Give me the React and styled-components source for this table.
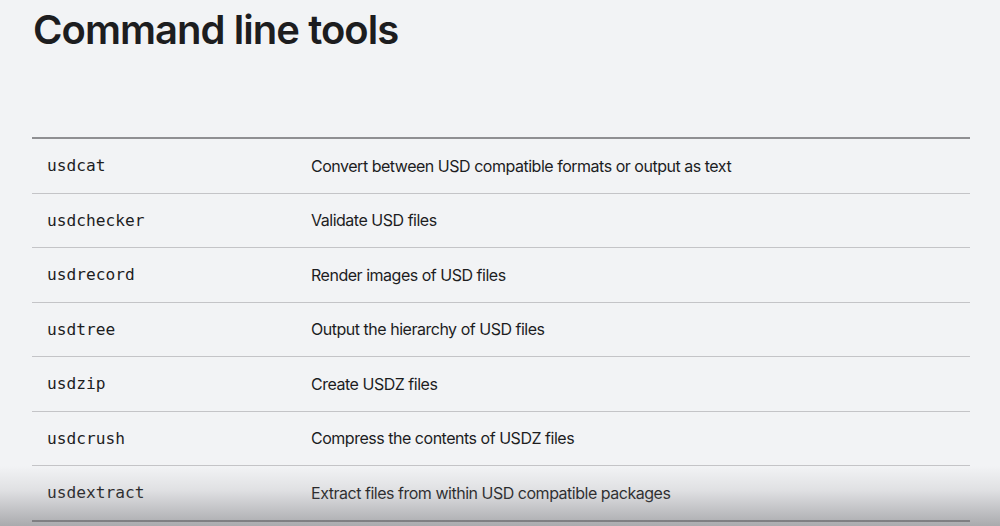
import React from "react";
import styled, { createGlobalStyle } from "styled-components";

const Global = createGlobalStyle`
  html, body { margin: 0; padding: 0; background: #f2f3f5; }
  body { width: 1000px; height: 526px; overflow: hidden; }
`;

const Page = styled.div`
  position: relative;
  width: 1000px;
  height: 526px;
  box-sizing: border-box;
  padding: 6px 30px 0 32px;
  font-family: Inter, "Noto Sans", sans-serif;
  color: #1d1d1f;
  overflow: hidden;
`;

const Title = styled.h1`
  margin: 0 0 0 1px;
  font-size: 40px;
  line-height: 48px;
  font-weight: 600;
  letter-spacing: -0.95px;
  color: #1d1d1f;
`;

const Table = styled.div`
  margin-top: 83px;
  border-top: 2px solid #8f8f92;
  display: flex;
  flex-direction: column;
`;

const Row = styled.div`
  display: grid;
  grid-template-columns: 279px 1fr;
  align-items: center;
  height: 53.5px;
  border-bottom: 1px solid #c4c4c7;
  &:last-child { border-bottom: 2px solid #8f8f92; }
`;

const Cmd = styled.span`
  padding-left: 15px;
  font-family: "DejaVu Sans Mono", "Liberation Mono", monospace;
  font-size: 16.2px;
  color: #1d1d1f;
`;

const Desc = styled.span`
  font-size: 16px;
  letter-spacing: -0.48px;
  color: #1d1d1f;
`;

const Shade = styled.div`
  position: absolute;
  left: 0;
  right: 0;
  bottom: 0;
  height: 60px;
  pointer-events: none;
  background: linear-gradient(to bottom, rgba(120,120,124,0) 0%, rgba(120,120,124,0.15) 40%, rgba(110,110,114,0.55) 100%);
`;

const rows = [
  ["usdcat", "Convert between USD compatible formats or output as text"],
  ["usdchecker", "Validate USD files"],
  ["usdrecord", "Render images of USD files"],
  ["usdtree", "Output the hierarchy of USD files"],
  ["usdzip", "Create USDZ files"],
  ["usdcrush", "Compress the contents of USDZ files"],
  ["usdextract", "Extract files from within USD compatible packages"],
];

export default function App() {
  return (
    <>
      <Global />
      <Page>
        <Title>Command line tools</Title>
        <Table>
          {rows.map(([c, d]) => (
            <Row key={c}>
              <Cmd>{c}</Cmd>
              <Desc>{d}</Desc>
            </Row>
          ))}
        </Table>
        <Shade />
      </Page>
    </>
  );
}
